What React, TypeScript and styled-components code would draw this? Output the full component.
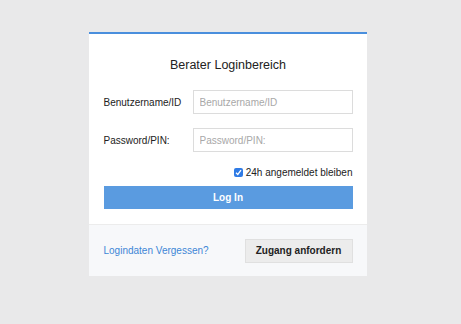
import styled, { createGlobalStyle } from "styled-components";

const GlobalStyle = createGlobalStyle`
  html, body {
    margin: 0;
    padding: 0;
    background: #e9e9ea;
    font-family: "Liberation Sans", Arial, sans-serif;
  }
`;

const Page = styled.div`
  width: 461px;
  height: 324px;
  padding-top: 32px;
  box-sizing: border-box;
  display: flex;
  justify-content: center;
`;

const Card = styled.div`
  width: 278px;
  height: 244px;
  margin-left: -6px;
  background: #ffffff;
  border-top: 2px solid #4a8fdd;
  display: flex;
  flex-direction: column;
  box-sizing: border-box;
`;

const Body = styled.div`
  padding: 0 14px 15px 15px;
  display: flex;
  flex-direction: column;
`;

const Title = styled.h1`
  margin: 24px 0 17px;
  height: 15px;
  line-height: 15px;
  font-size: 12.5px;
  font-weight: 400;
  color: #222;
  text-align: center;
`;

const Row = styled.div`
  display: flex;
  align-items: center;
  height: 24px;
  margin-bottom: 14px;
`;

const Label = styled.label`
  width: 89px;
  font-size: 10px;
  color: #222;
`;

const Input = styled.input`
  width: 160px;
  height: 24px;
  box-sizing: border-box;
  border: 1px solid #dcdcdc;
  padding: 0 6px;
  font-family: inherit;
  font-size: 10px;
  color: #333;
  outline: none;
  &::placeholder {
    color: #a8a8a8;
  }
`;

const Remember = styled.label`
  display: flex;
  justify-content: flex-end;
  align-items: center;
  gap: 3px;
  height: 16px;
  font-size: 10px;
  color: #222;
  margin: -2px 0 6px;
`;

const Check = styled.span`
  width: 9px;
  height: 9px;
  border-radius: 2px;
  background: #2f7be5;
  display: flex;
  align-items: center;
  justify-content: center;
`;

const LoginButton = styled.button`
  height: 23px;
  border: none;
  padding: 0;
  background: #5a9be0;
  color: #fff;
  font-family: inherit;
  font-weight: 700;
  font-size: 10px;
  cursor: pointer;
`;

const Footer = styled.div`
  flex: 1;
  background: #f7f8fa;
  border-top: 1px solid #ececec;
  display: flex;
  align-items: center;
  justify-content: space-between;
  padding: 0 14px 0 15px;
`;

const Link = styled.a`
  font-size: 10px;
  color: #3d86d6;
  text-decoration: none;
`;

const RequestButton = styled.button`
  width: 108px;
  height: 24px;
  padding: 0;
  white-space: nowrap;
  border: 1px solid #e0e0e0;
  background: #ececec;
  color: #222;
  font-family: inherit;
  font-weight: 700;
  font-size: 10px;
`;

export default function App() {
  return (
    <>
      <GlobalStyle />
      <Page>
        <Card>
          <Body>
            <Title>Berater Loginbereich</Title>
            <Row>
              <Label>Benutzername/ID</Label>
              <Input placeholder="Benutzername/ID" />
            </Row>
            <Row>
              <Label>Password/PIN:</Label>
              <Input type="password" placeholder="Password/PIN:" />
            </Row>
            <Remember>
              <Check>
                <svg width="7" height="7" viewBox="0 0 7 7">
                  <path d="M1 3.8 L2.8 5.5 L6 1.2" stroke="#fff" strokeWidth="1.3" fill="none" />
                </svg>
              </Check>
              24h angemeldet bleiben
            </Remember>
            <LoginButton>Log In</LoginButton>
          </Body>
          <Footer>
            <Link href="#">Logindaten Vergessen?</Link>
            <RequestButton>Zugang anfordern</RequestButton>
          </Footer>
        </Card>
      </Page>
    </>
  );
}
